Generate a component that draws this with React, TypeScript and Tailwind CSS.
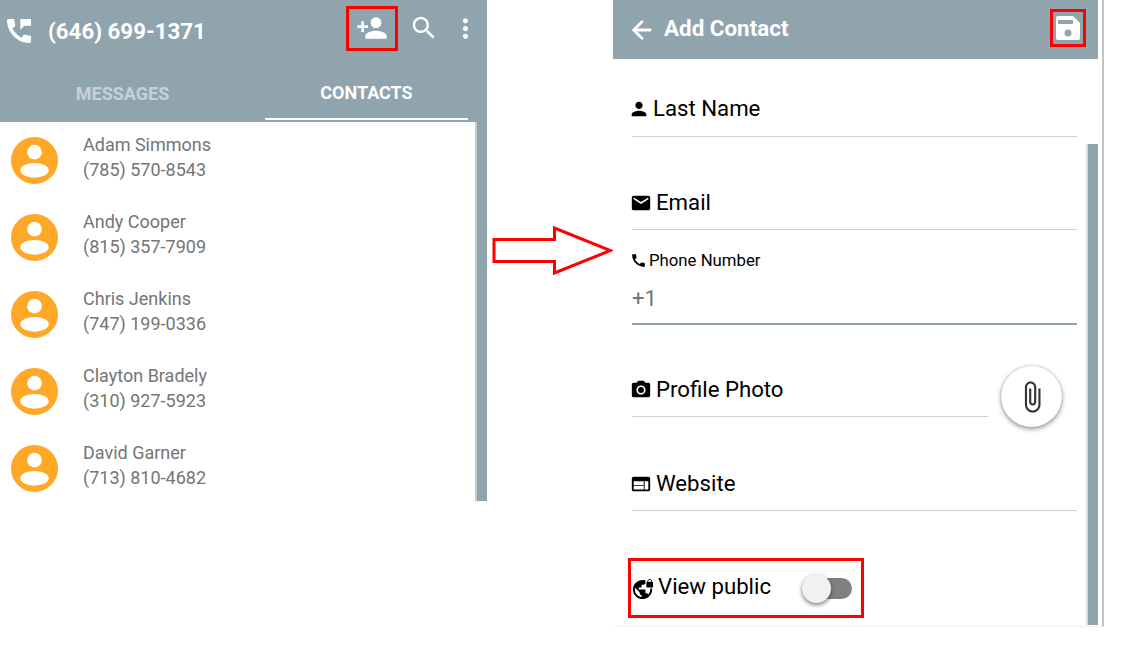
import React from 'react';
import { ArrowLeft } from 'lucide-react';

const contacts = [
  { name: 'Adam Simmons', phone: '(785) 570-8543' },
  { name: 'Andy Cooper', phone: '(815) 357-7909' },
  { name: 'Chris Jenkins', phone: '(747) 199-0336' },
  { name: 'Clayton Bradely', phone: '(310) 927-5923' },
  { name: 'David Garner', phone: '(713) 810-4682' },
];

const Mi: React.FC<{ d: string; className?: string }> = ({ d, className }) => (
  <svg viewBox="0 0 24 24" fill="currentColor" fillRule="evenodd" className={className}>
    <path d={d} />
  </svg>
);

const icons = {
  person: 'M12 12c2.21 0 4-1.79 4-4s-1.79-4-4-4-4 1.79-4 4 1.79 4 4 4zm0 2c-2.67 0-8 1.34-8 4v2h16v-2c0-2.66-5.33-4-8-4z',
  personAdd: 'M15 12c2.21 0 4-1.79 4-4s-1.79-4-4-4-4 1.79-4 4 1.79 4 4 4zm-9-2V7H4v3H1v2h3v3h2v-3h3v-2H6zm9 4c-2.67 0-8 1.34-8 4v2h16v-2c0-2.66-5.33-4-8-4z',
  email: 'M20 4H4c-1.1 0-2 .9-2 2v12c0 1.1.9 2 2 2h16c1.1 0 2-.9 2-2V6c0-1.1-.9-2-2-2zm0 4l-8 5-8-5V6l8 5 8-5v2z',
  phone: 'M20.01 15.38c-1.23 0-2.42-.2-3.53-.56-.35-.12-.74-.03-1.01.24l-1.57 1.97c-2.83-1.35-5.48-3.9-6.89-6.83l1.95-1.66c.27-.28.35-.67.24-1.02-.37-1.11-.56-2.3-.56-3.53 0-.54-.45-.99-.99-.99H4.19C3.65 3 3 3.24 3 3.99 3 13.28 10.73 21 20.01 21c.71 0 .99-.63.99-1.18v-3.45c0-.54-.45-.99-.99-.99z',
  callMerge: 'M20.01 15.38c-1.23 0-2.42-.2-3.53-.56-.35-.12-.74-.03-1.01.24l-1.57 1.97c-2.83-1.35-5.48-3.9-6.89-6.83l1.95-1.66c.27-.28.35-.67.24-1.02-.37-1.11-.56-2.3-.56-3.53 0-.54-.45-.99-.99-.99H4.19C3.65 3 3 3.24 3 3.99 3 13.28 10.73 21 20.01 21c.71 0 .99-.63.99-1.18v-3.45c0-.54-.45-.99-.99-.99zM21 3h-8v8l3-3h5V3z',
  camera: 'M12 15.2a3.2 3.2 0 1 0 0-6.4 3.2 3.2 0 0 0 0 6.4zM9 2 7.17 4H4c-1.1 0-2 .9-2 2v12c0 1.1.9 2 2 2h16c1.1 0 2-.9 2-2V6c0-1.1-.9-2-2-2h-3.17L15 2H9zm3 15c-2.76 0-5-2.24-5-5s2.24-5 5-5 5 2.24 5 5-2.24 5-5 5z',
  web: 'M20 4H4c-1.1 0-2 .9-2 2v12c0 1.1.9 2 2 2h16c1.1 0 2-.9 2-2V6c0-1.1-.9-2-2-2zM4 18v-4h11v4H4zm0-5V9h11v4H4zm16 5h-4V9h4v9z',
  save: 'M2 0h15l7 7v15c0 1.1-.9 2-2 2H2c-1.1 0-2-.9-2-2V2C0 .9.9 0 2 0zm0 4v4h15V4H2zm10 9.5a3.5 3.5 0 1 0 0 7 3.5 3.5 0 0 0 0-7z',
  search: 'M15.5 14h-.79l-.28-.27C15.41 12.59 16 11.11 16 9.5 16 5.91 13.09 3 9.5 3S3 5.91 3 9.5 5.91 16 9.5 16c1.61 0 3.09-.59 4.23-1.57l.27.28v.79l5 4.99L20.49 19l-4.99-5zm-6 0C7.01 14 5 11.99 5 9.5S7.01 5 9.5 5 14 7.01 14 9.5 11.99 14 9.5 14z',
  more: 'M12 8c1.1 0 2-.9 2-2s-.9-2-2-2-2 .9-2 2 .9 2 2 2zm0 2c-1.1 0-2 .9-2 2s.9 2 2 2 2-.9 2-2-.9-2-2-2zm0 6c-1.1 0-2 .9-2 2s.9 2 2 2 2-.9 2-2-.9-2-2-2z',
  attach: 'M16.5 6v11.5c0 2.21-1.79 4-4 4s-4-1.79-4-4V5c0-1.38 1.12-2.5 2.5-2.5s2.5 1.12 2.5 2.5v10.5c0 .55-.45 1-1 1s-1-.45-1-1V6H10v9.5c0 1.38 1.12 2.5 2.5 2.5s2.5-1.12 2.5-2.5V5c0-2.21-1.79-4-4-4S7 2.79 7 5v12.5c0 3.04 2.46 5.5 5.5 5.5s5.5-2.46 5.5-5.5V6h-1.5z',
  vpn: 'M21 5v-.5C21 3.12 19.88 2 18.5 2S16 3.12 16 4.5V5c-.55 0-1 .45-1 1v4c0 .55.45 1 1 1h5c.55 0 1-.45 1-1V6c0-.55-.45-1-1-1zm-.8 0h-3.4v-.5c0-.94.76-1.7 1.7-1.7s1.7.76 1.7 1.7V5zM18.92 12c.04.33.08.66.08 1 0 2.08-.8 3.97-2.1 5.39-.26-.81-1-1.39-1.9-1.39h-1v-3c0-.55-.45-1-1-1H7v-2h2c.55 0 1-.45 1-1V8h2c1.1 0 2-.9 2-2V3.46c-.95-.3-1.95-.46-3-.46C5.48 3 1 7.48 1 13s4.48 10 10 10 10-4.48 10-10c0-.34-.02-.67-.05-1h-2.03zM10 20.93c-3.95-.49-7-3.85-7-7.93 0-.62.08-1.21.21-1.79L8 16v1c0 1.1.9 2 2 2v1.93z',
};

const Avatar: React.FC = () => (
  <svg viewBox="0 0 48 48" className="mb-[1px] h-[47px] w-[47px] shrink-0">
    <circle cx="24" cy="24" r="24" fill="#ffa726" />
    <circle cx="24" cy="15.5" r="7.5" fill="#fff" />
    <ellipse cx="24" cy="34" rx="14.5" ry="7.5" fill="#fff" />
  </svg>
);

const Field: React.FC<{ icon: string; label: string; iconCls: string; h: string }> = ({ icon, label, iconCls, h }) => (
  <div className={`flex items-center border-b border-[#cfcfcf] ${h}`}>
    <Mi d={icon} className={`shrink-0 ${iconCls}`} />
    <span className="text-[22.2px]">{label}</span>
  </div>
);

export default function App() {
  return (
    <div className="relative h-[648px] w-[1147px] overflow-hidden bg-white font-['Roboto',sans-serif]">
      <div className="flex">
        {/* contacts screen */}
        <div className="flex h-[501px] w-[487px] shrink-0 flex-col">
          <div className="h-[122px] shrink-0 bg-[#90a4ae] text-white">
            <div className="flex h-[62px] items-center pl-[3px]">
              <Mi d={icons.callMerge} className="h-[32px] w-[32px] shrink-0" />
              <span className="ml-[13px] w-[298px] shrink-0 whitespace-nowrap text-[22.3px] font-bold leading-none">(646) 699-1371</span>
              <div className="mb-[6px] flex items-center">
                <div className="flex h-[45px] w-[52px] items-center justify-center border-[3px] border-[#ff0000]">
                  <Mi d={icons.personAdd} className="h-[32px] w-[32px]" />
                </div>
                <Mi d={icons.search} className="ml-[11px] h-[30px] w-[30px]" />
                <Mi d={icons.more} className="ml-[11px] h-[31px] w-[31px]" />
              </div>
            </div>
            <div className="flex h-[58px] text-[18px] font-bold">
              <div className="flex w-[245px] items-center justify-center pt-[5px] text-white/50">MESSAGES</div>
              <div className="ml-[20px] flex w-[203px] items-center justify-center border-b-2 border-white pt-[5px]">CONTACTS</div>
            </div>
          </div>
          <div className="flex min-h-0 flex-1">
            <div className="w-[475px] overflow-hidden">
              {contacts.map((c) => (
                <div key={c.name} className="flex h-[77px] items-center pl-[11px] text-[#757575]">
                  <Avatar />
                  <div className="mb-[8px] ml-[25px] text-[18px] leading-[25px]">
                    <div>{c.name}</div>
                    <div>{c.phone}</div>
                  </div>
                </div>
              ))}
            </div>
            <div className="w-[12px] border-l-2 border-[#c8c8c8] bg-[#90a4ae]" />
          </div>
        </div>

        {/* arrow between the two screens */}
        <svg viewBox="0 0 126 52" className="mt-[224px] h-[52px] w-[126px] shrink-0" fill="none">
          <path d="M7 15.5h60.5V4l56 22.5-56 22.5V37.5H7z" stroke="#ff0000" strokeWidth="3" />
        </svg>

        {/* add contact screen */}
        <div className="h-[627px] w-[491px] shrink-0 border-r-2 border-b border-r-[#c4c4c4] border-b-[#f0f0f0]">
          <div className="flex h-[59px] w-[485px] items-center bg-[#90a4ae] text-white">
            <ArrowLeft className="ml-[15px] h-[28px] w-[28px]" strokeWidth={2.4} />
            <span className="mb-[2px] ml-[8px] text-[22.4px] font-bold">Add Contact</span>
            <div className="mb-[3px] ml-auto mr-[12px] flex h-[38px] w-[36px] items-center justify-center border-[3px] border-[#ff0000]">
              <Mi d={icons.save} className="h-[24px] w-[24px]" />
            </div>
          </div>
          <div className="flex">
            <div className="w-[464px] pl-[19px] text-black">
              <Field icon={icons.person} label="Last Name" iconCls="-ml-[4px] mr-[3px] h-[22px] w-[22px]" h="h-[78px] pt-[22px]" />
              <div className="mt-[15px]">
                <Field icon={icons.email} label="Email" iconCls="-ml-[2px] mr-[4px] h-[22px] w-[22px]" h="h-[78px] pt-[24px]" />
              </div>
              <div className="flex h-[95px] flex-col border-b-2 border-[#90a4ae]">
                <div className="mt-[21px] flex items-center text-[16.75px] leading-[18px]">
                  <Mi d={icons.phone} className="-ml-[2px] mr-[2px] h-[17px] w-[17px]" />
                  <span>Phone Number</span>
                </div>
                <div className="mt-[18px] text-[22px] leading-[24px] text-[#757575]">+1</div>
              </div>
              <div className="flex">
                <div className="w-[356px]">
                  <Field icon={icons.camera} label="Profile Photo" iconCls="-ml-[2px] mr-[4px] h-[22px] w-[22px]" h="h-[92px] pt-[38px]" />
                </div>
                <div className="ml-[13px] mt-[41px] flex h-[61px] w-[61px] items-center justify-center rounded-full bg-white shadow-[0_2px_5px_rgba(0,0,0,0.4),0_0_2px_rgba(0,0,0,0.25)]">
                  <Mi d={icons.attach} className="h-[34px] w-[34px] text-[#333333]" />
                </div>
              </div>
              <div className="mt-[7px]">
                <Field icon={icons.web} label="Website" iconCls="-ml-[2px] mr-[4px] h-[22px] w-[22px]" h="h-[77px] pt-[24px]" />
              </div>
              <div className="-ml-[4px] mt-[47px] flex h-[60px] w-[236px] items-center border-[3px] border-[#ff0000] pl-[1px]">
                <Mi d={icons.vpn} className="h-[23px] w-[23px] shrink-0" />
                <span className="mb-[2px] ml-[3px] text-[22.2px]">View public</span>
                <div className="relative ml-[31px] h-[21px] w-[50px] rounded-full bg-[#808080]">
                  <div className="absolute -top-[4px] left-0 h-[29px] w-[29px] rounded-full bg-[#f1f1f1] shadow-[0_2px_4px_rgba(0,0,0,0.5)]" />
                </div>
              </div>
            </div>
            <div className="ml-[9px] mt-[85px] h-[481px] w-[12px] border-l-2 border-[#dddddd] bg-[#90a4ae]" />
          </div>
        </div>
      </div>
    </div>
  );
}
